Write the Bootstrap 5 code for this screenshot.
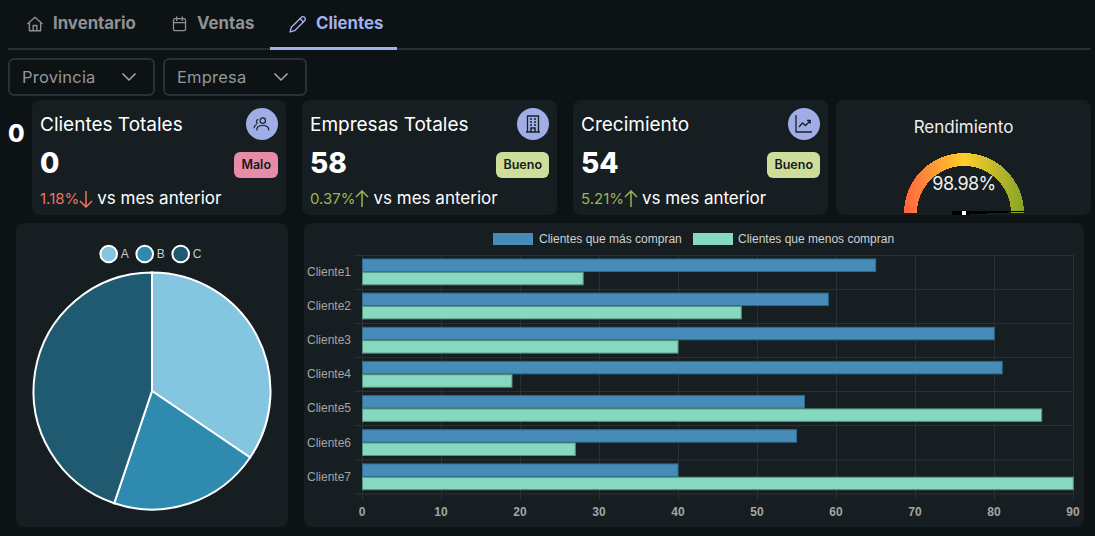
<!DOCTYPE html>
<html lang="es" data-bs-theme="dark">
<head>
<meta charset="utf-8">
<title>Clientes</title>
<link href="https://cdn.jsdelivr.net/npm/bootstrap@5.3.0/dist/css/bootstrap.min.css" rel="stylesheet">
<style>
body{background:#0d1215;font-family:Inter,"Noto Sans",sans-serif;color:#fff;padding:0 4px 0 8px;height:536px;overflow:hidden}
.tabbar{height:50px;border-bottom:2px solid #282f33;gap:0}
.tabitem{height:50px;display:flex;align-items:center;font-size:16.800px;font-weight:700;color:#8e9294;text-decoration:none;padding-left:18px;padding-bottom:3px}
.tabitem svg{flex:none;margin-right:9px}
.t1{width:146px}.t2{width:116px;padding-left:17px}.t3{width:127px;color:#a3b1ea;border-bottom:3px solid #a3b1ea;height:50px;padding-bottom:0}
.pick{height:38px;margin-top:8px;gap:8px}
.pick .form-select{height:38px;background-color:transparent;border:2px solid #283136;border-radius:6px;color:#94989a;font-size:16.500px;padding:0 0 0 12px;letter-spacing:.2px;background-position:right 16px center;background-size:16px 10px;background-image:url("data:image/svg+xml,%3csvg xmlns='http://www.w3.org/2000/svg' viewBox='0 0 16 10'%3e%3cpath fill='none' stroke='%23aaa' stroke-width='1.5' d='M1.5 1.5 8 8l6.500-6.500'/%3e%3c/svg%3e")}
.s1{width:147px}.s2{width:144px}
.kpis{margin-top:4px;height:115px}
.stray{width:24px;font-size:24px;line-height:36px;font-weight:800;align-self:flex-start;margin-top:16px}
.tile{background:#161e21;border-radius:8px}
.k1{width:254px;margin-right:16px}.k2{width:255px;margin-right:16px}.k3{width:255px;margin-right:8px}.k4{width:255px}
.tile-in{padding:8px 8px 7px}
.ktitle{font-size:19px;line-height:32px;font-weight:400;padding-top:1px}
.orb{width:32px;height:32px;border-radius:50%;background:#a0aee8;color:#1b2024;flex:none}
.kmid{height:42px;margin-top:3px}
.knum{font-size:28px;line-height:38px;font-weight:800;padding-bottom:4px}
.pill{height:26px;padding:0 7px;border-radius:6px;font-size:12.500px;font-weight:600;color:#15191c;display:flex;align-items:center}
.bad{background:#e68ca7}.good{background:#cfdd9a}
.kfoot{font-size:17px;line-height:20px;margin-top:2px}
.kfoot span{font-size:15px;font-weight:400}
.down{color:#f0735e}.up{color:#9cb552}
.kfoot svg{vertical-align:-4px;margin:0 4px 0 0}
.gtitle{font-size:17px;font-weight:400;line-height:24px;margin-top:15px;color:#eef0f1}
.gwrap{margin-top:13px;height:62px}
.gval{font-size:18px;letter-spacing:-.6px}
.charts{margin:8px 0 0 8px;height:304px}
.c1{width:272px;margin-right:16px}.c2{width:780px}
.charts svg{display:block}
.lbl{font-family:"Liberation Sans",Arial,sans-serif;font-size:12px}
</style>
</head>
<body>
<nav class="d-flex tabbar">
  <a class="tabitem t1" href="#"><svg width="18" height="18" viewBox="0 0 24 24" fill="none" stroke="currentColor" stroke-width="1.800" stroke-linejoin="round"><path d="M2 12 12 3l10 9"/><path d="M4.500 10v11h15V10"/><path d="M9.500 21v-7h5v7"/></svg>Inventario</a>
  <a class="tabitem t2" href="#"><svg width="17" height="18" viewBox="0 0 24 24" fill="none" stroke="currentColor" stroke-width="1.800" stroke-linecap="round" stroke-linejoin="round"><rect x="3.500" y="4.500" width="17" height="17" rx="2"/><path d="M3.500 10h17M8 2v5M16 2v5"/></svg>Ventas</a>
  <a class="tabitem t3" href="#"><svg width="20" height="20" viewBox="0 0 24 24" fill="none" stroke="currentColor" stroke-width="1.700" stroke-linecap="round" stroke-linejoin="round" class="me-2"><path d="M4 16 16.500 3.500a3 3 0 0 1 4 4L8 20l-5.500 1.500z"/><path d="m14.500 5.500 4 4"/></svg>Clientes</a>
</nav>
<div class="d-flex pick">
  <select class="form-select s1" aria-label="Provincia"><option>Provincia</option></select>
  <select class="form-select s2" aria-label="Empresa"><option>Empresa</option></select>
</div>
<div class="d-flex kpis">
  <div class="stray">0</div>
  <div class="tile tile-in k1">
    <div class="d-flex justify-content-between"><div class="ktitle">Clientes Totales</div><div class="orb d-flex align-items-center justify-content-center"><svg width="18" height="18" viewBox="0 0 24 24" fill="none" stroke="currentColor" stroke-width="1.600" stroke-linecap="round"><circle cx="13" cy="7.500" r="3.600"/><path d="M5 20c0-4 3.500-6 8-6s8 2 8 6M6.500 6a3 3 0 0 0-1 5M1.500 17c0-2 1-3.500 3-4"/></svg></div></div>
    <div class="d-flex justify-content-between align-items-center kmid"><div class="knum">0</div><div class="pill bad">Malo</div></div>
    <div class="kfoot"><span class="down">1.18%<svg width="14" height="18" viewBox="0 0 14 18" fill="none" stroke="currentColor" stroke-width="1.500"><path d="M7 1v16M1 11l6 6 6-6"/></svg></span>vs mes anterior</div>
  </div>
  <div class="tile tile-in k2">
    <div class="d-flex justify-content-between"><div class="ktitle">Empresas Totales</div><div class="orb d-flex align-items-center justify-content-center"><svg width="20" height="20" viewBox="0 0 20 20" fill="none" stroke="currentColor" stroke-width="1.300"><path d="M4.500 18V2h11v16M3 18h14"/><path d="M7 5h2M11 5h2M7 8h2M11 8h2M7 11h2M11 11h2M8 18v-4h4v4" stroke-width="1.500"/></svg></div></div>
    <div class="d-flex justify-content-between align-items-center kmid"><div class="knum">58</div><div class="pill good">Bueno</div></div>
    <div class="kfoot"><span class="up">0.37%<svg width="14" height="18" viewBox="0 0 14 18" fill="none" stroke="currentColor" stroke-width="1.500"><path d="M7 17V1M1 7l6-6 6 6"/></svg></span>vs mes anterior</div>
  </div>
  <div class="tile tile-in k3">
    <div class="d-flex justify-content-between"><div class="ktitle">Crecimiento</div><div class="orb d-flex align-items-center justify-content-center"><svg width="20" height="20" viewBox="0 0 20 20" fill="none" stroke="currentColor" stroke-width="1.300"><path d="M2 1v17h16"/><path d="m5 13 3.500-4 3 2.500L16 7M13 6.500h3.200v3"/></svg></div></div>
    <div class="d-flex justify-content-between align-items-center kmid"><div class="knum">54</div><div class="pill good">Bueno</div></div>
    <div class="kfoot"><span class="up">5.21%<svg width="14" height="18" viewBox="0 0 14 18" fill="none" stroke="currentColor" stroke-width="1.500"><path d="M7 17V1M1 7l6-6 6 6"/></svg></span>vs mes anterior</div>
  </div>
  <div class="tile k4 text-center">
    <div class="gtitle">Rendimiento</div>
    <div class="gwrap">
      <svg width="255" height="62" viewBox="0 0 255 62" class="d-block" style="overflow:visible">
        <defs><linearGradient id="gg" x1="0" x2="1" y1="0" y2="0"><stop offset="0" stop-color="#ff6340"/><stop offset=".5" stop-color="#ffcf2a"/><stop offset="1" stop-color="#86a428"/></linearGradient></defs>
        <path d="M68 61a60 60 0 0 1 120 0h-13a47 47 0 0 0-94 0z" fill="url(#gg)" shape-rendering="crispEdges"/>
        <path d="M116 59 188 59.200V59.800L160 61 116 63.500z" fill="#000" shape-rendering="crispEdges"/>
        <rect x="126" y="59" width="4" height="4" fill="#fff"/>
        <text class="gval" x="128" y="38" text-anchor="middle" fill="#eef0f1" font-family="Inter,sans-serif">98.98%</text>
      </svg>
    </div>
  </div>
</div>
<div class="d-flex charts">
  <div class="tile c1">
    <svg width="272" height="304" viewBox="0 0 272 304" role="img" aria-label="Gráfico circular">
      <g stroke="#fff" stroke-width="2">
        <circle cx="92.700" cy="31" r="8.300" fill="#84c5df"/><circle cx="128.700" cy="31" r="8.300" fill="#2e8baf"/><circle cx="164.700" cy="31" r="8.300" fill="#1f5a70"/>
        <path d="M136 168V49.500A118.500 118.500 0 0 1 234.100 234.500z" fill="#84c5df"/>
        <path d="M136 168 234.100 234.500A118.500 118.500 0 0 1 98.200 280.300z" fill="#2e8baf"/>
        <path d="M136 168 98.200 280.300A118.500 118.500 0 0 1 136 49.500z" fill="#1f5a70"/>
      </g>
      <g class="lbl" fill="#c9cbcc"><text x="104.700" y="35">A</text><text x="140.700" y="35">B</text><text x="176.700" y="35">C</text></g>
    </svg>
  </div>
  <div class="tile c2">
    <svg width="780" height="304" viewBox="0 0 780 304" role="img" aria-label="Gráfico de barras">
      <g stroke="#283034" stroke-width="1">
        <path d="M50 32.500H769.500M50 66.500H769.500M50 100.500H769.500M50 134.500H769.500M50 168.500H769.500M50 202.500H769.500M50 237H769.500M50 271H769.500"/>
        <path d="M58.500 32V277M137.500 32V277M216.500 32V277M295.500 32V277M374.500 32V277M453.500 32V277M532.500 32V277M611.500 32V277M690.500 32V277M769.500 32V277"/>
      </g>
      <g fill="#478cb8" stroke="#2e6a8e">
        <rect x="58.500" y="36" width="513.200" height="12.500"/><rect x="58.500" y="70.100" width="465.800" height="12.500"/><rect x="58.500" y="104.300" width="631.800" height="12.500"/><rect x="58.500" y="138.400" width="639.700" height="12.500"/><rect x="58.500" y="172.600" width="442" height="12.500"/><rect x="58.500" y="206.700" width="434.100" height="12.500"/><rect x="58.500" y="240.900" width="315.500" height="12.500"/>
      </g>
      <g fill="#86d8c0" stroke="#55937f">
        <rect x="58.500" y="49.300" width="220.700" height="12.500"/><rect x="58.500" y="83.400" width="378.800" height="12.500"/><rect x="58.500" y="117.600" width="315.500" height="12.500"/><rect x="58.500" y="151.700" width="149.500" height="12.500"/><rect x="58.500" y="185.900" width="679.200" height="12.500"/><rect x="58.500" y="220" width="212.800" height="12.500"/><rect x="58.500" y="254.200" width="710.800" height="12.500"/>
      </g>
      <rect x="189" y="10" width="40" height="12" fill="#478cb8"/>
      <rect x="389" y="10" width="40" height="12" fill="#86d8c0"/>
      <g class="lbl" fill="#cfd1d2"><text x="235" y="20">Clientes que más compran</text><text x="434" y="20">Clientes que menos compran</text></g>
      <g class="lbl" fill="#a2a5a7" text-anchor="end">
        <text x="47" y="53">Cliente1</text><text x="47" y="87">Cliente2</text><text x="47" y="121">Cliente3</text><text x="47" y="155">Cliente4</text><text x="47" y="189">Cliente5</text><text x="47" y="223.500">Cliente6</text><text x="47" y="257.500">Cliente7</text>
      </g>
      <g class="lbl" fill="#a2a5a7" text-anchor="middle" font-weight="700">
        <text x="58" y="293">0</text><text x="137" y="293">10</text><text x="216" y="293">20</text><text x="295" y="293">30</text><text x="374" y="293">40</text><text x="453" y="293">50</text><text x="532" y="293">60</text><text x="611" y="293">70</text><text x="690" y="293">80</text><text x="769" y="293">90</text>
      </g>
    </svg>
  </div>
</div>
<script src="https://cdn.jsdelivr.net/npm/bootstrap@5.3.0/dist/js/bootstrap.bundle.min.js"></script>
</body>
</html>
